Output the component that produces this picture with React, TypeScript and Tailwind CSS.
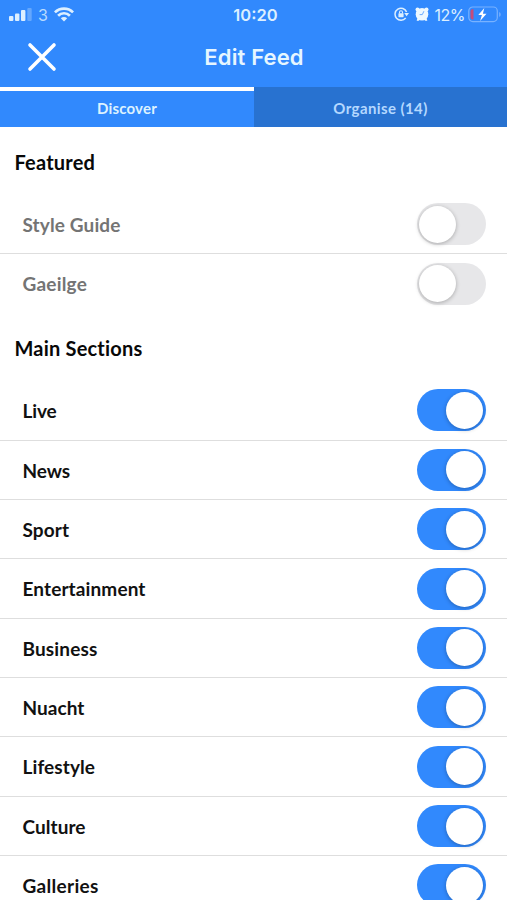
import { useState } from "react";

interface Item {
  name: string;
  on: boolean;
  spacing: string;
}

const featured: Item[] = [
  { name: "Style Guide", on: false, spacing: "tracking-[0.12px]" },
  { name: "Gaeilge", on: false, spacing: "tracking-[0.2px]" },
];

const mainSections: Item[] = [
  { name: "Live", on: true, spacing: "tracking-[-0.1px]" },
  { name: "News", on: true, spacing: "tracking-[-0.1px]" },
  { name: "Sport", on: true, spacing: "tracking-[0.1px]" },
  { name: "Entertainment", on: true, spacing: "tracking-[0.12px]" },
  { name: "Business", on: true, spacing: "tracking-[0.15px]" },
  { name: "Nuacht", on: true, spacing: "tracking-[0.05px]" },
  { name: "Lifestyle", on: true, spacing: "tracking-[0.1px]" },
  { name: "Culture", on: true, spacing: "tracking-[0.05px]" },
  { name: "Galleries", on: true, spacing: "tracking-[0.3px]" },
];

function StatusBar() {
  return (
    <div className="grid h-[29px] grid-cols-3 items-center pl-[9px] pr-[5px] font-['Inter',sans-serif] text-[#dcefff]">
      <div className="flex items-center">
        <svg className="-mt-px" width="24" height="14" viewBox="0 0 24 14" fill="currentColor">
          <rect x="0" y="9" width="4.4" height="5" rx="1" />
          <rect x="6" y="6.5" width="4.4" height="7.5" rx="1" />
          <rect x="12" y="3" width="4.4" height="11" rx="1" />
          <rect x="18.3" y="1" width="4.4" height="13" rx="1" opacity="0.3" />
        </svg>
        <span className="ml-[5px] text-[16px] leading-none opacity-80">3</span>
        <svg className="ml-[6px]" width="20" height="15" viewBox="0 0 20 15" fill="none" stroke="currentColor" strokeWidth="2.7">
          <path d="M.9 5.4a12.8 12.8 0 0 1 18.2 0" />
          <path d="M4.1 8.7a8.3 8.3 0 0 1 11.8 0" />
          <path d="M10 14.5 6.8 11.2a4.6 4.6 0 0 1 6.4 0Z" fill="currentColor" stroke="none" />
        </svg>
      </div>
      <span className="pt-px text-center text-[16.5px] font-semibold leading-none">10:20</span>
      <div className="flex items-center justify-end">
        <svg className="-mt-px" width="16" height="14" viewBox="0 0 16 14" fill="none" stroke="currentColor" strokeWidth="1.5">
          <path d="M11.7 11A6 6 0 1 1 12.6 5" />
          <path d="M10.2 6h4.8l-2.4 3.2Z" fill="currentColor" stroke="none" />
          <rect x="4.4" y="6.2" width="5.2" height="4" rx=".6" fill="currentColor" stroke="none" />
          <path d="M5.5 6.4V5.2a1.5 1.5 0 0 1 3 0v1.2" strokeWidth="1.1" />
        </svg>
        <svg className="-mt-[2px] ml-[5px]" width="14" height="14" viewBox="0 0 14 14">
          <g fill="#edf8ff">
            <circle cx="7" cy="7.3" r="6.3" />
            <circle cx="2.5" cy="2.5" r="2" />
            <circle cx="11.5" cy="2.5" r="2" />
            <path d="m1.6 13.4 1.3-2.9 2.3 1.7-2 1.8ZM12.4 13.4l-1.3-2.9-2.3 1.7 2 1.8Z" />
          </g>
          <path d="M8.9 4.2 7.3 7.6H4.6" fill="none" stroke="#5aa2ff" strokeWidth="0.9" />
        </svg>
        <span className="ml-[6px] text-[16px] leading-none tracking-[-0.5px]">12%</span>
        <svg className="-mt-px ml-[3px]" width="34" height="17" viewBox="0 0 34 17" fill="none">
          <rect x=".8" y="1" width="28.5" height="14.6" rx="4" stroke="#78b2ff" strokeWidth="1.2" />
          <path d="M31 6v4.8c1.3-.5 1.8-1.4 1.8-2.4S32.3 6.5 31 6Z" fill="#6ba9ff" />
          <path d="M5.5 3.2H4.2A2 2 0 0 0 2.5 5v6.6a2 2 0 0 0 1.7 1.8h1.3Z" fill="#c64b7b" />
          <path d="m16.3 2-6 7h3.6l-1.8 6 6.4-7.3h-3.6Z" fill="#fff" />
        </svg>
      </div>
    </div>
  );
}

function Toggle({ on, onClick, label }: { on: boolean; onClick: () => void; label: string }) {
  return (
    <button
      role="switch"
      aria-checked={on}
      aria-label={label}
      onClick={onClick}
      className={`flex h-[42px] w-[69px] shrink-0 items-center rounded-full pl-[2px] pr-[3px] ${
        on ? "justify-end bg-[#3189fd]" : "justify-start bg-[#e7e7e9]"
      }`}
    >
      <span className="h-[37px] w-[37px] rounded-full bg-white shadow-[0_1px_4px_rgba(0,0,0,0.28)]" />
    </button>
  );
}

function Section({ title, items }: { title: string; items: Item[] }) {
  const [rows, setRows] = useState(items);

  const toggle = (name: string) =>
    setRows(rows.map((row) => (row.name === name ? { ...row, on: !row.on } : row)));

  return (
    <section>
      <h2 className="flex h-[67.5px] items-center pl-[14.5px] pt-[0.8px] text-[20px] font-bold tracking-[0.2px] text-[#080808]">
        {title}
      </h2>
      <ul>
        {rows.map((row) => (
          <li
            key={row.name}
            className="flex h-[59.36px] items-center justify-between border-b border-[#dedede] pl-[22.5px] pr-[21px] last:border-transparent"
          >
            <span className={`pt-[2px] text-[19px] font-bold ${row.spacing} ${row.on ? "text-[#111]" : "text-[#747474]"}`}>
              {row.name}
            </span>
            <Toggle on={row.on} label={row.name} onClick={() => toggle(row.name)} />
          </li>
        ))}
      </ul>
    </section>
  );
}

export default function App() {
  return (
    <div className="h-[900px] w-full overflow-hidden bg-white font-['Lato',sans-serif]">
      <header className="h-[87px] bg-[#3189fd]">
        <StatusBar />
        <div className="grid h-[57px] grid-cols-[1fr_auto_1fr] items-center">
          <button aria-label="Close" className="-mt-[2px] ml-[27px] w-[30px] text-white">
            <svg width="30" height="30" viewBox="0 0 30 30" stroke="currentColor" strokeWidth="3.6" strokeLinecap="round">
              <path d="m3 3 24 24M27 3 3 27" />
            </svg>
          </button>
          <h1 className="pl-px font-['Inter',sans-serif] text-[22px] font-semibold tracking-[0.15px] text-[#e6f6ff]">
            Edit Feed
          </h1>
        </div>
      </header>
      <nav className="grid h-[40px] grid-cols-[254px_1fr] text-[15px] font-bold">
        <button className="border-t-4 border-white bg-[#3189fd] pb-[2px] tracking-[0.2px] text-[#dcf2ff]">Discover</button>
        <button className="border-t-4 border-[#2872d0] bg-[#2872d0] pb-[2px] tracking-[0.4px] text-[#b4d8ff]">
          Organise (14)
        </button>
      </nav>
      <main className="pt-[0.6px]">
        <Section title="Featured" items={featured} />
        <Section title="Main Sections" items={mainSections} />
      </main>
    </div>
  );
}
